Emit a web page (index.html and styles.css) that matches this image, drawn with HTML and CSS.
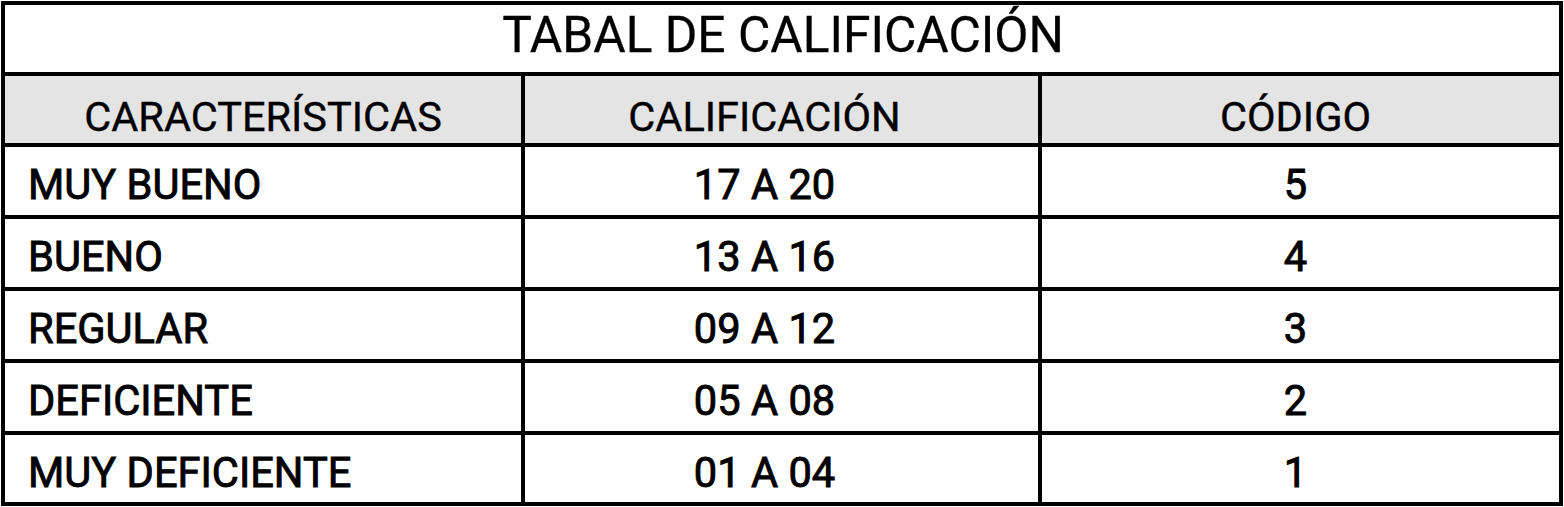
FILE: index.html
```html
<!DOCTYPE html>
<html lang="es">
<head>
<meta charset="utf-8">
<title>Tabal de calificación</title>
<link rel="stylesheet" href="styles.css">
</head>
<body>
<div class="grade-table">
  <div class="cell title">TABAL DE CALIFICACIÓN</div>
  <div class="cell head c1">CARACTERÍSTICAS</div>
  <div class="cell head c2">CALIFICACIÓN</div>
  <div class="cell head c3">CÓDIGO</div>

  <div class="cell body c1">MUY BUENO</div>
  <div class="cell body c2">17 A 20</div>
  <div class="cell body c3">5</div>

  <div class="cell body c1">BUENO</div>
  <div class="cell body c2">13 A 16</div>
  <div class="cell body c3">4</div>

  <div class="cell body c1">REGULAR</div>
  <div class="cell body c2">09 A 12</div>
  <div class="cell body c3">3</div>

  <div class="cell body c1">DEFICIENTE</div>
  <div class="cell body c2">05 A 08</div>
  <div class="cell body c3">2</div>

  <div class="cell body c1">MUY DEFICIENTE</div>
  <div class="cell body c2">01 A 04</div>
  <div class="cell body c3">1</div>
</div>
</body>
</html>
```
FILE: styles.css
```css
html, body {
  margin: 0;
  padding: 0;
  background: #ffffff;
}

body {
  padding: 1px 0 0 1px;
  font-family: Roboto, "Liberation Sans", sans-serif;
  color: #000;
}

.grade-table {
  width: 1562px;
  height: 505px;
  box-sizing: border-box;
  background: #000;
  padding: 4px;
  display: grid;
  grid-template-columns: 516px 513px 517px;
  grid-template-rows: 67px 67px 68px 68px 68px 68px 67px;
  gap: 4px;
}

.cell {
  background: #fff;
  display: flex;
  align-items: center;
  white-space: nowrap;
  line-height: 1;
}

.title {
  grid-column: 1 / -1;
  justify-content: center;
  font-size: 49.7px;
  font-weight: 400;
  padding-bottom: 6px;
  padding-left: 2px;
  -webkit-text-stroke: 0.3px #000;
}

.head {
  background: #e4e4e4;
  font-size: 41.5px;
  font-weight: 400;
  justify-content: center;
  padding-top: 15px;
  -webkit-text-stroke: 0.4px #000;
}

.body {
  font-size: 41.6px;
  font-weight: 400;
  padding-top: 8px;
  -webkit-text-stroke: 0.9px #000;
}

.body.c1 {
  padding-left: 23px;
}

.c2 {
  justify-content: center;
  padding-right: 34px;
}

.c3 {
  justify-content: center;
  padding-right: 10px;
}
```
